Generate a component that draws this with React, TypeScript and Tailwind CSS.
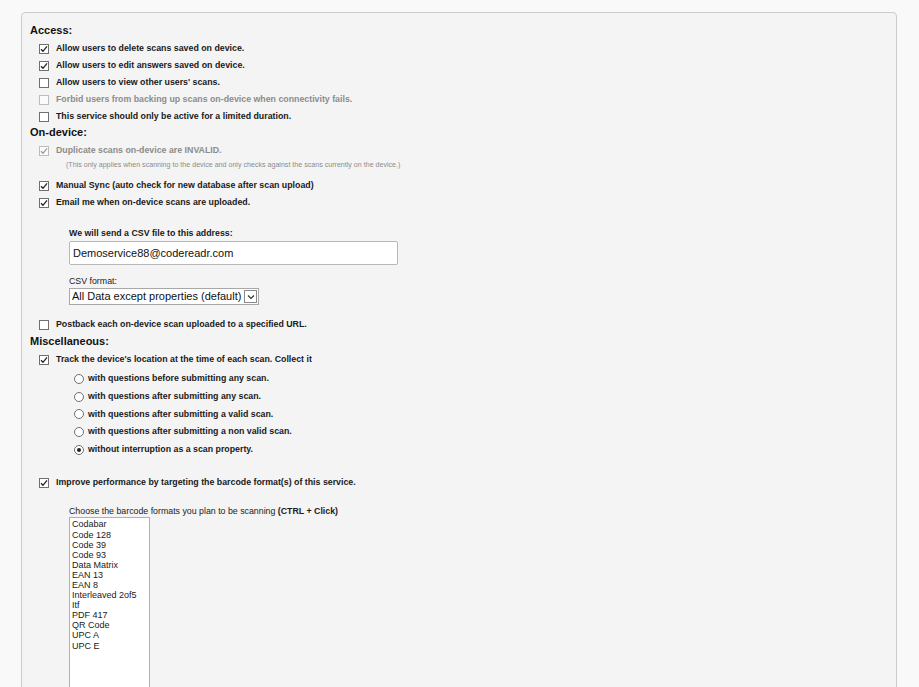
import React from 'react'

const font = { fontFamily: '"Liberation Sans", Arial, sans-serif' }

// 旧式复选框
const Check = ({ checked, disabled }: { checked?: boolean; disabled?: boolean }) => (
  <span
    className={
      disabled
        ? 'w-[10px] h-[10px] border border-[#bcbcbc] bg-[#fbfbfb] flex items-center justify-center shrink-0'
        : 'w-[10px] h-[10px] border border-[#707070] bg-white flex items-center justify-center shrink-0'
    }
  >
    {checked && (
      <svg width="8" height="8" viewBox="0 0 8 8">
        <path
          d="M1 4.2 L3 6.3 L7 1.3"
          fill="none"
          stroke={disabled ? '#9a9a9a' : '#222'}
          strokeWidth="1.3"
        />
      </svg>
    )}
  </span>
)

const Radio = ({ checked }: { checked?: boolean }) => (
  <span className="w-[10px] h-[10px] rounded-full border border-[#707070] bg-white flex items-center justify-center shrink-0">
    {checked && <span className="w-[4px] h-[4px] rounded-full bg-[#222]" />}
  </span>
)

const Row = ({
  children,
  checked,
  disabled,
}: {
  children: React.ReactNode
  checked?: boolean
  disabled?: boolean
}) => (
  <div className="h-[17px] flex items-center gap-[7px] pl-[9px]">
    <Check checked={checked} disabled={disabled} />
    <span className={disabled ? 'text-[8.8px] font-bold text-[#8c8c8c]' : 'text-[8.8px] font-bold text-[#1a1a1a]'}>
      {children}
    </span>
  </div>
)

const RadioRow = ({ children, checked }: { children: React.ReactNode; checked?: boolean }) => (
  <div className="h-[17.7px] flex items-center gap-[4px] pl-[44px]">
    <Radio checked={checked} />
    <span className="text-[8.8px] font-bold text-[#1a1a1a]">{children}</span>
  </div>
)

const Heading = ({ children }: { children: React.ReactNode }) => (
  <h2 className="h-[15px] mb-[2px] flex items-center text-[11px] font-bold text-[#111]">{children}</h2>
)

const formats = [
  'Codabar',
  'Code 128',
  'Code 39',
  'Code 93',
  'Data Matrix',
  'EAN 13',
  'EAN 8',
  'Interleaved 2of5',
  'Itf',
  'PDF 417',
  'QR Code',
  'UPC A',
  'UPC E',
]

export default function App() {
  return (
    <div className="w-[919px] h-[687px] overflow-hidden bg-[#f9f9f9] pt-[12px] pl-[21px]" style={font}>
      <div className="w-[876px] h-[720px] bg-[#f4f4f4] border border-[#cbcbcb] rounded-[4px] pt-[10px] pl-[8px]">
        {/* Access */}
        <Heading>Access:</Heading>
        <Row checked>Allow users to delete scans saved on device.</Row>
        <Row checked>Allow users to edit answers saved on device.</Row>
        <Row>Allow users to view other users' scans.</Row>
        <Row disabled>Forbid users from backing up scans on-device when connectivity fails.</Row>
        <Row>This service should only be active for a limited duration.</Row>

        {/* On-device */}
        <Heading>On-device:</Heading>
        <Row checked disabled>Duplicate scans on-device are INVALID.</Row>
        <div className="pl-[36px] text-[7.1px] text-[#8c8c8c] h-[12px] flex items-center mb-[6px]">
          (This only applies when scanning to the device and only checks against the scans currently on the device.)
        </div>
        <Row checked>Manual Sync (auto check for new database after scan upload)</Row>
        <Row checked>Email me when on-device scans are uploaded.</Row>

        {/* CSV 邮件设置 */}
        <div className="pl-[39px] pt-[17px]">
          <div className="h-[12px] flex items-center text-[8.8px] font-bold text-[#1a1a1a]">
            We will send a CSV file to this address:
          </div>
          <div className="mt-[1px] w-[329px] h-[24px] bg-white border border-[#b8b8b8] rounded-[2px] flex items-center pl-[3px] text-[11px] text-[#111]">
            Demoservice88@codereadr.com
          </div>
          <div className="mt-[11px] h-[12px] flex items-center text-[8.8px] text-[#1a1a1a]">CSV format:</div>
          <div className="w-[190px] h-[17px] bg-white border border-[#a8a8a8] flex items-center justify-between pl-[2px] pr-[1px] text-[11px] text-[#111]">
            <span>All Data except properties (default)</span>
            <span className="w-[13px] h-[13px] border border-[#8a8a8a] bg-white flex items-center justify-center">
              <svg width="8" height="6" viewBox="0 0 8 6">
                <path d="M1 1.5 L4 4.5 L7 1.5" fill="none" stroke="#333" strokeWidth="1.2" />
              </svg>
            </span>
          </div>
        </div>
        <div className="mt-[11px]">
          <Row>Postback each on-device scan uploaded to a specified URL.</Row>
        </div>

        {/* Miscellaneous */}
        <div className="mt-[1px]">
          <Heading>Miscellaneous:</Heading>
        </div>
        <div className="mt-[1px]">
          <Row checked>Track the device's location at the time of each scan. Collect it</Row>
        </div>
        <div className="mt-[2px]">
          <RadioRow>with questions before submitting any scan.</RadioRow>
          <RadioRow>with questions after submitting any scan.</RadioRow>
          <RadioRow>with questions after submitting a valid scan.</RadioRow>
          <RadioRow>with questions after submitting a non valid scan.</RadioRow>
          <RadioRow checked>without interruption as a scan property.</RadioRow>
        </div>
        <div className="mt-[16px]">
          <Row checked>Improve performance by targeting the barcode format(s) of this service.</Row>
        </div>

        {/* 条码格式 */}
        <div className="pl-[39px] pt-[14px]">
          <div className="h-[12px] flex items-center text-[8.8px] text-[#1a1a1a]">
            Choose the barcode formats you plan to be scanning&nbsp;<span className="font-bold">(CTRL + Click)</span>
          </div>
          <div className="w-[81px] h-[200px] bg-white border border-[#b0b0b0] pt-[1px] pl-[2px]">
            {formats.map((f) => (
              <div key={f} className="h-[10.1px] leading-[10.1px] text-[9px] text-[#1a1a1a]">
                {f}
              </div>
            ))}
          </div>
        </div>
      </div>
    </div>
  )
}
